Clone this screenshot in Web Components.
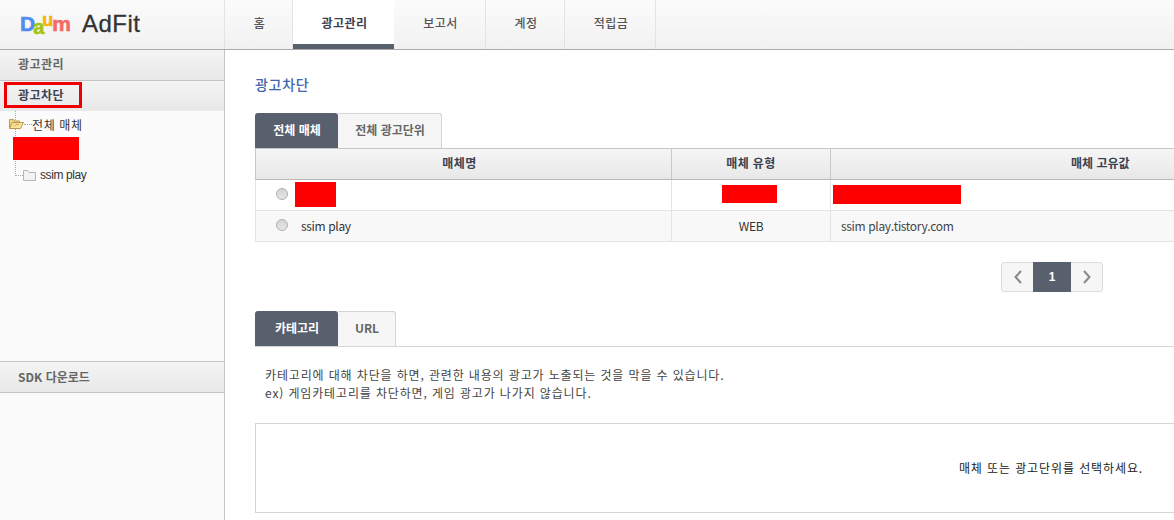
<!DOCTYPE html>
<html lang="ko">
<head>
<meta charset="utf-8">
<title>AdFit</title>
<style>
    html, body { margin: 0; padding: 0; height: 520px; overflow: hidden; background: #fff; }
    body { font-family: "Liberation Sans", "Noto Sans CJK KR", sans-serif; font-size: 12px; color: #333; }
</style>
</head>
<body>
<adfit-app></adfit-app>
<script>
const KR = '"Noto Sans CJK KR", "Liberation Sans", sans-serif';

class AdfitHeader extends HTMLElement {
    constructor() {
        super();
        const shadow = this.attachShadow({ mode: 'open' });
        shadow.innerHTML = `
            <style>
                :host { display: flex; height: 50px; box-sizing: border-box; border-bottom: 1px solid #aaa;
                    background: linear-gradient(#fbfbfb, #f1f1f1); font-family: ${KR}; }
                .logo { width: 224px; box-sizing: border-box; padding: 10px 0 0 20px; display: flex; align-items: flex-start; }
                .daum { display: flex; width: 52px; font: bold 21px/28px "Liberation Sans", sans-serif; -webkit-text-stroke: .6px; }
                .daum span:nth-child(1) { color: #4f8ef0; }
                .daum span:nth-child(2) { color: #a3c511; font-size: 20px; margin-left: -2px; transform: translateY(3px); }
                .daum span:nth-child(3) { color: #f5b400; font-size: 18px; margin-left: -2px; transform: translateY(-4px); }
                .daum span:nth-child(4) { color: #f56a64; margin-left: -1px; }
                .adfit { margin-left: 10px; font: 24px/28px "Liberation Sans", sans-serif; color: #333; letter-spacing: .5px; -webkit-text-stroke: .3px; }
                nav { display: flex; border-left: 1px solid #e3e3e3; }
                nav a { display: flex; align-items: center; justify-content: center; box-sizing: border-box; height: 49px;
                    padding: 0 0 5px 2px; border-right: 1px solid #e3e3e3; font-size: 12px; font-weight: 500; color: #555; letter-spacing: .5px; }
                nav a.on { background: #fff; color: #3b4150; font-weight: 700; border-bottom: 5px solid #585f6d;
                    padding-bottom: 0; border-right: 0; }
            </style>
            <div class="logo">
                <div class="daum"><span>D</span><span>a</span><span>u</span><span>m</span></div>
                <div class="adfit">AdFit</div>
            </div>
            <nav>
                <a style="width:68px">홈</a>
                <a class="on" style="width:101px">광고관리</a>
                <a style="width:92px">보고서</a>
                <a style="width:79px">계정</a>
                <a style="width:91px">적립금</a>
            </nav>
        `;
    }
}

class SideRow extends HTMLElement {
    constructor() {
        super();
        const shadow = this.attachShadow({ mode: 'open' });
        shadow.innerHTML = `
            <style>
                :host { display: flex; align-items: center; box-sizing: border-box; height: 31px; padding: 0 0 4px 18px;
                    background: linear-gradient(#f4f4f4, #e8e8e8); border-bottom: 1px solid #c4c4c4;
                    font-family: ${KR}; font-size: 12px; font-weight: 700; color: #666; }
            </style>
            <slot></slot>
        `;
    }
}

class FolderTree extends HTMLElement {
    constructor() {
        super();
        const shadow = this.attachShadow({ mode: 'open' });
        shadow.innerHTML = `
            <style>
                :host { display: block; position: relative; height: 250px; box-sizing: border-box; padding: 5px 0 0 9px;
                    font-family: ${KR}; font-size: 12px; color: #333; }
                .vline { position: absolute; left: 15px; top: 0; height: 65px; border-left: 1px dotted #aaa; }
                .hline { flex: none; border-top: 1px dotted #aaa; }
                .root, .leaf { display: flex; align-items: center; position: relative; }
                .root { height: 16px; letter-spacing: .6px; }
                .redact { width: 66px; height: 23px; background: #f00; margin: 5px 0 0 4px; position: relative; }
                .leaf { height: 18px; margin: 6px 0 0 6px; font: 12px "Liberation Sans", sans-serif; letter-spacing: -.4px; }
                svg { flex: none; display: block; }
            </style>
            <div class="vline"></div>
            <div class="root">
                <svg width="15" height="12" viewBox="0 0 15 12">
                    <path d="M.5 10.500V1.500h4l1 1.500h5v2" fill="#f2d27c" stroke="#b99a4a"/>
                    <path d="M.5 10.500l3-6h11l-3 6z" fill="#f8e39c" stroke="#b99a4a"/>
                    <path d="M5 8.500l2-2h3" fill="none" stroke="#c9a552"/>
                </svg>
                <div class="hline" style="width:8px"></div>
                <span>전체 매체</span>
            </div>
            <div class="redact"></div>
            <div class="leaf">
                <div class="hline" style="width:8px"></div>
                <svg width="13" height="11" viewBox="0 0 13 11" style="margin-right:4px">
                    <path d="M.5 10.500V.5h4l1.500 2h6.500v8z" fill="#f3f3f3" stroke="#b5b5b5"/>
                </svg>
                <span>ssim play</span>
            </div>
        `;
    }
}

class AdfitSidebar extends HTMLElement {
    constructor() {
        super();
        const shadow = this.attachShadow({ mode: 'open' });
        shadow.innerHTML = `
            <style>
                :host { display: block; flex: none; width: 225px; box-sizing: border-box; background: #fbfbfb;
                    border-right: 1px solid #c4c4c4; height: 470px; }
                .picked { padding: 0 0 3px 4px; height: 30px; border-bottom: 0; color: #3b4150; }
                .mark { box-sizing: border-box; width: 78px; height: 26px; padding: 0 0 0 11px; border: 3px solid #ee0000;
                    display: flex; align-items: center; letter-spacing: .5px; }
                .sdk { height: 32px; border-top: 1px solid #c4c4c4; padding-bottom: 2px; }
            </style>
            <side-row style="letter-spacing:.5px">광고관리</side-row>
            <side-row class="picked"><span class="mark">광고차단</span></side-row>
            <folder-tree></folder-tree>
            <side-row class="sdk">SDK 다운로드</side-row>
        `;
    }
}

class BlockTabs extends HTMLElement {
    constructor() {
        super();
        this.attachShadow({ mode: 'open' });
    }
    connectedCallback() {
        const widths = this.getAttribute('widths').split(',');
        const tabs = this.getAttribute('labels').split(',').map((label, i) =>
            `<a class="${i === 0 ? 'on' : ''}" style="width:${widths[i]}px">${label}</a>`).join('');
        this.shadowRoot.innerHTML = `
            <style>
                :host { display: flex; height: 35px; box-sizing: border-box; font-family: ${KR}; font-size: 12px; font-weight: 700; }
                a { display: flex; align-items: center; justify-content: center; box-sizing: border-box; height: 35px; padding: 0 0 3px 1px;
                    background: #f6f6f6; color: #666; border: 1px solid #d4d4d4; border-left: 0; border-bottom: 0;
                    border-radius: 0 3px 0 0; }
                a.on { background: #585f6d; color: #fff; border: 0; border-radius: 3px 3px 0 0; }
            </style>
            ${tabs}
        `;
    }
}

class MediaTable extends HTMLElement {
    constructor() {
        super();
        const shadow = this.attachShadow({ mode: 'open' });
        shadow.innerHTML = `
            <style>
                :host { display: block; font-size: 12px; color: #333; }
                .row { display: grid; grid-template-columns: 416px 159px 1fr; height: 31px; box-sizing: border-box;
                    border-bottom: 1px solid #e4e4e4; border-left: 1px solid #e4e4e4; }
                .row > div { display: flex; align-items: center; border-right: 1px solid #e4e4e4; letter-spacing: -.35px; min-width: 0; padding-bottom: 2px; }
                .head { height: 32px; background: linear-gradient(#f5f5f5, #e8e8e8); border-top: 1px solid #c8c8c8;
                    border-bottom: 1px solid #b8b8b8; border-left-color: #c8c8c8; font-family: ${KR}; font-weight: 700; color: #3b4150; }
                .head > div { justify-content: center; border-right-color: #c8c8c8; letter-spacing: .4px; padding-bottom: 3px; }
                .head > div:first-child { padding-right: 8px; }
                .head .key { justify-content: flex-start; padding-left: 240px; letter-spacing: 0; }
                .alt { background: #f8f8f8; }
                .name { padding-left: 20px; gap: 7px; }
                .type { justify-content: center; }
                .val { padding-left: 10px; color: #444; }
                .val.cover { padding-left: 2px; }
                i { flex: none; width: 10px; height: 10px; border: 1px solid #b0b0b0; border-radius: 50%;
                    background: linear-gradient(#d4d4d4, #e6e6e6); }
                b { display: block; background: #f00; }
                .alt span.t { margin-left: 6px; }
            </style>
            <div class="row head"><div>매체명</div><div>매체 유형</div><div class="key">매체 고유값</div></div>
            <div class="row">
                <div class="name"><i></i><b style="width:41px;height:25px"></b></div>
                <div class="type"><b style="width:55px;height:18px;margin-right:4px"></b></div>
                <div class="val cover"><b style="width:128px;height:19px"></b></div>
            </div>
            <div class="row alt">
                <div class="name"><i></i><span class="t">ssim play</span></div>
                <div class="type">WEB</div>
                <div class="val">ssim play.tistory.com</div>
            </div>
        `;
    }
}

class PageNav extends HTMLElement {
    constructor() {
        super();
        const shadow = this.attachShadow({ mode: 'open' });
        shadow.innerHTML = `
            <style>
                :host { display: flex; justify-content: center; padding-left: 2px; }
                .pager { display: flex; height: 30px; box-sizing: border-box; border: 1px solid #dcdcdc; border-radius: 3px;
                    background: #f6f6f6; }
                .arrow { width: 31px; display: flex; align-items: center; justify-content: center; }
                .num { width: 38px; margin: -1px 0; background: #585f6d; color: #fff; font: bold 12px/30px "Liberation Sans", sans-serif;
                    text-align: center; }
                svg { display: block; }
            </style>
            <div class="pager">
                <div class="arrow"><svg width="8" height="14" viewBox="0 0 8 14"><path d="M7 1L1.500 7 7 13" fill="none" stroke="#888" stroke-width="2"/></svg></div>
                <div class="num">1</div>
                <div class="arrow"><svg width="8" height="14" viewBox="0 0 8 14"><path d="M1 1l5.500 6L1 13" fill="none" stroke="#888" stroke-width="2"/></svg></div>
            </div>
        `;
    }
}

class AdfitMain extends HTMLElement {
    constructor() {
        super();
        const shadow = this.attachShadow({ mode: 'open' });
        shadow.innerHTML = `
            <style>
                :host { display: block; flex: none; width: 1592px; padding: 25px 0 0 30px; font-family: ${KR}; font-size: 12px; }
                h2 { margin: 0; height: 18px; font-size: 14px; line-height: 18px; font-weight: 500; color: #3f66ad; letter-spacing: .7px; }
                .tabs1 { margin-top: 20px; }
                page-nav { margin-top: 20px; }
                .tabs2 { margin-top: 19px; }
                .rule { border-top: 1px solid #d4d4d4; }
                p { margin: 19px 0 0 10px; line-height: 18px; color: #444; height: 36px; letter-spacing: .86px; }
                .msg { margin-top: 21px; height: 90px; box-sizing: border-box; border: 1px solid #d4d4d4; padding-bottom: 2px;
                    display: flex; align-items: center; justify-content: center; color: #222; letter-spacing: .9px; }
            </style>
            <h2>광고차단</h2>
            <block-tabs class="tabs1" labels="전체 매체,전체 광고단위" widths="83,104"></block-tabs>
            <media-table></media-table>
            <page-nav></page-nav>
            <block-tabs class="tabs2" labels="카테고리,URL" widths="83,58"></block-tabs>
            <div class="rule"></div>
            <p>카테고리에 대해 차단을 하면, 관련한 내용의 광고가 노출되는 것을 막을 수 있습니다.<br>ex) 게임카테고리를 차단하면, 게임 광고가 나가지 않습니다.</p>
            <div class="msg">매체 또는 광고단위를 선택하세요.</div>
        `;
    }
}

class AdfitApp extends HTMLElement {
    constructor() {
        super();
        const shadow = this.attachShadow({ mode: 'open' });
        shadow.innerHTML = `
            <style>
                :host { display: block; width: 1174px; height: 520px; overflow: hidden; }
                .body { display: flex; height: 470px; }
            </style>
            <adfit-header></adfit-header>
            <div class="body">
                <adfit-sidebar></adfit-sidebar>
                <adfit-main></adfit-main>
            </div>
        `;
    }
}

customElements.define('adfit-header', AdfitHeader);
customElements.define('side-row', SideRow);
customElements.define('folder-tree', FolderTree);
customElements.define('adfit-sidebar', AdfitSidebar);
customElements.define('block-tabs', BlockTabs);
customElements.define('media-table', MediaTable);
customElements.define('page-nav', PageNav);
customElements.define('adfit-main', AdfitMain);
customElements.define('adfit-app', AdfitApp);
</script>
</body>
</html>
